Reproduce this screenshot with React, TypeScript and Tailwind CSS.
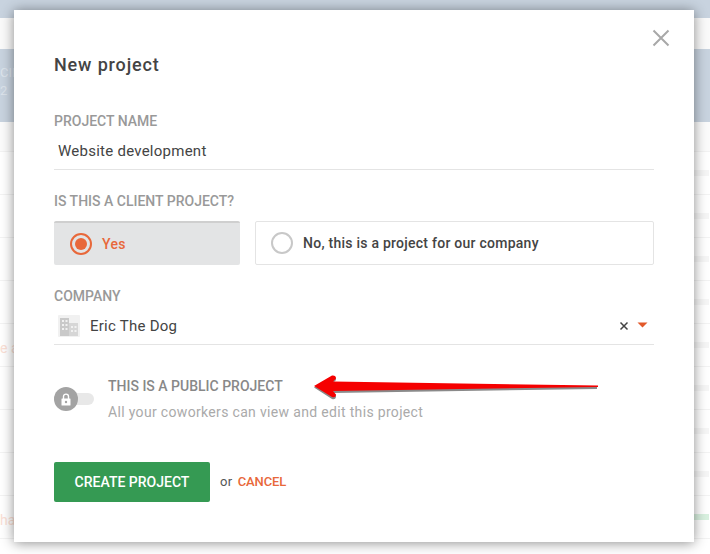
import React from 'react';

const font = { fontFamily: 'Roboto, "Liberation Sans", sans-serif' };

const rows = [
  { bar: '#f6f6f6', text: '' },
  { bar: '#f6f6f6', text: '' },
  { bar: '#f6f6f6', text: '' },
  { bar: '#f6f6f6', text: '' },
  { bar: '#f6f6f6', text: 'e a' },
  { bar: '#f6f6f6', text: '' },
  { bar: '#f6f6f6', text: '' },
  { bar: '#f6f6f6', text: '' },
  { bar: '#d9f1e0', text: 'ha' },
];

const BackgroundPage = () => (
  <div className="flex flex-col h-[554px] w-[710px] overflow-hidden bg-white">
    <div className="h-[18px] bg-[#c8d3df]" />
    <div className="h-[31px] bg-[#fafafa]" />
    <div className="h-[73px] bg-[#c8d3df] flex flex-col justify-center pb-[8px] text-white/40 text-[13px] leading-[18px]">
      <span>CIN</span>
      <span>2</span>
    </div>
    <div className="h-[30px] bg-[#fbfbfb] border-b border-[#f3f3f3]" />
    {rows.map((row, i) => (
      <div key={i} className="h-[43px] shrink-0 border-b border-[#f3f3f3] flex items-center justify-between">
        <span className="pt-[6px] text-[14px] text-[#fbe0d5]">{row.text}</span>
        <div className="h-[6px] w-[16px] mr-px" style={{ backgroundColor: row.bar }} />
      </div>
    ))}
  </div>
);

const BuildingIcon = () => (
  <svg width="22" height="22" viewBox="0 0 22 22" className="shrink-0 -mt-[2px]">
    <rect width="22" height="22" rx="1" fill="#f1f1f1" />
    <rect x="2" y="3" width="9" height="18" fill="#c9c9c9" />
    <rect x="11" y="8" width="9" height="13" fill="#d6d6d6" />
    <g fill="#f1f1f1">
      <rect x="4" y="5" width="2" height="2" />
      <rect x="7.5" y="5" width="2" height="2" />
      <rect x="4" y="9" width="2" height="2" />
      <rect x="7.5" y="9" width="2" height="2" />
      <rect x="4" y="13" width="2" height="2" />
      <rect x="7.5" y="13" width="2" height="2" />
      <rect x="13" y="11" width="2" height="2" />
      <rect x="16.5" y="11" width="2" height="2" />
      <rect x="13" y="15" width="2" height="2" />
      <rect x="16.5" y="15" width="2" height="2" />
    </g>
  </svg>
);

const Arrow = () => (
  <svg width="290" height="28" viewBox="0 0 290 28" className="absolute left-[311px] top-[372px]">
    <path d="M3 14.5 L21 4 Q25 3 25 7 L22 10 L286 14 L286 16 L22 20 L25 23 Q25 27 21 26 Z" fill="#8a8a8a" transform="translate(0 1)" />
    <path d="M3 14 L21 3.5 Q25 3 25 6.5 L22 9.5 L287 13.5 L287 15 L22 19 L25 22.5 Q25 26 21 25 Z" fill="#f50000" />
  </svg>
);

export default function App() {
  return (
    <div className="relative h-[554px] w-[710px] overflow-hidden" style={font}>
      <BackgroundPage />

      <div className="absolute left-[14px] top-[10px] w-[680px] h-[532px] bg-white shadow-[0_1px_12px_rgba(0,0,0,0.45)] px-10 text-[#444]">
        {/* close */}
        <svg width="18" height="18" viewBox="0 0 18 18" className="absolute right-[24px] top-[19px]">
          <path d="M1.5 1.5 L16.5 16.5 M16.5 1.5 L1.5 16.5" stroke="#a8a8a8" strokeWidth="2" fill="none" />
        </svg>

        <h1 className="pt-[44px] text-[18px] leading-[22px] font-medium tracking-[0.85px] text-[#444]">New project</h1>

        <label className="block mt-[36px] text-[14px] leading-[18px] font-medium text-[#999]">PROJECT NAME</label>
        <div className="mt-[6px] h-[34px] pl-1 text-[15px] leading-[30px] tracking-[0.25px] text-[#444] border-b border-[#e4e4e4]">
          Website development
        </div>

        <label className="block mt-[22px] text-[14px] leading-[18px] font-medium text-[#999]">IS THIS A CLIENT PROJECT?</label>
        <div className="mt-[11px] flex gap-[15px] h-[44px]">
          <div className="w-[186px] bg-[#e3e4e5] border-t-2 border-[#cfcfcf] rounded-[2px] flex items-center pl-4 gap-[10px]">
            <span className="w-[22px] h-[22px] rounded-full border-2 border-[#e8683a] flex items-center justify-center">
              <span className="w-[12px] h-[12px] rounded-full bg-[#e8683a]" />
            </span>
            <span className="text-[14px] font-medium text-[#e8683a] tracking-[0.3px]">Yes</span>
          </div>
          <div className="flex-1 border border-[#e4e4e4] rounded-[2px] flex items-center pl-[15px] gap-[10px]">
            <span className="w-[22px] h-[22px] rounded-full border-2 border-[#c8c8c8]" />
            <span className="text-[14px] font-medium text-[#444] tracking-[0.25px]">No, this is a project for our company</span>
          </div>
        </div>

        <label className="block mt-[22px] text-[14px] leading-[18px] font-medium text-[#999]">COMPANY</label>
        <div className="mt-[5px] h-[35px] pl-1 flex items-center gap-[10px] border-b border-[#e4e4e4]">
          <BuildingIcon />
          <span className="flex-1 -mt-[2px] text-[15px] tracking-[0.25px] text-[#444]">Eric The Dog</span>
          <svg width="10" height="10" viewBox="0 0 10 10" className="-mt-[2px] -mr-[1px] ml-[2px]">
            <path d="M1.5 1.5 L8.5 8.5 M8.5 1.5 L1.5 8.5" stroke="#444" strokeWidth="1.5" fill="none" />
          </svg>
          <svg width="11" height="6" viewBox="0 0 11 6" className="mr-[6px] -ml-[1px] -mt-[4px]">
            <path d="M0.5 0.5 H10.5 L5.5 5.5 Z" fill="#e2592a" />
          </svg>
        </div>

        <div className="mt-[32px] flex">
          <div className="relative w-[40px] h-[24px] mt-[10px] mr-[14px]">
            <div className="absolute left-0 top-[6px] w-[40px] h-[12px] rounded-full bg-[#e8e8e8]" />
            <div className="absolute left-0 top-0 w-[24px] h-[24px] rounded-full bg-[#a3a3a3] flex items-center justify-center">
              <svg width="10" height="13" viewBox="0 0 10 13">
                <path d="M2.5 6 V3.6 a2.5 2.5 0 0 1 5 0 V6" stroke="#fff" strokeWidth="1.4" fill="none" />
                <rect x="0.5" y="5.5" width="9" height="7" rx="0.5" fill="#fff" />
                <circle cx="5" cy="9" r="1.2" fill="#a3a3a3" />
              </svg>
            </div>
          </div>
          <div>
            <div className="text-[14px] leading-[18px] font-medium text-[#888]">THIS IS A PUBLIC PROJECT</div>
            <div className="mt-[8px] text-[14px] leading-[18px] text-[#aaa] tracking-[0.33px]">All your coworkers can view and edit this project</div>
          </div>
        </div>

        <div className="mt-[41px] flex items-center">
          <button className="w-[156px] h-[40px] bg-[#359a53] rounded-[2px] text-white text-[14px] font-medium">CREATE PROJECT</button>
          <span className="ml-[10px] text-[13px] text-[#555] tracking-[0.4px]">or</span>
          <span className="ml-[5px] text-[13px] font-medium text-[#e8683a] tracking-[-0.1px]">CANCEL</span>
        </div>
      </div>

      <Arrow />
    </div>
  );
}
